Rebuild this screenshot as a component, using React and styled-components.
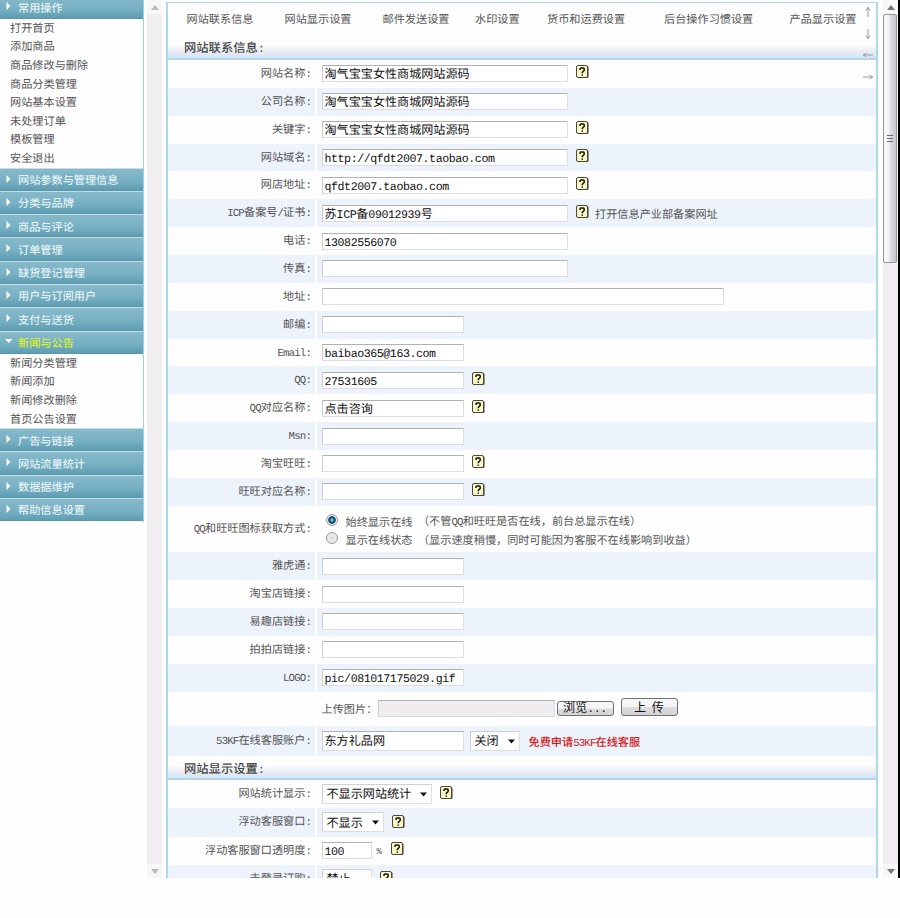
import React from "react";
import styled, { createGlobalStyle } from "styled-components";

const Global = createGlobalStyle`
  * { box-sizing: border-box; }
  body { margin: 0; background: #fefefe; text-rendering: geometricPrecision; }
`;

const CJK = `"Noto Sans CJK SC", sans-serif`;
const MONO = `"Liberation Mono", "Noto Sans CJK SC", monospace`;

const Frame = styled.div`
  display: flex;
  width: 900px;
  height: 878px;
  overflow: hidden;
  background: #fefefe;
  font-family: ${CJK};
  font-size: 11.17px;
  line-height: 16px;
  color: #555;
  white-space: nowrap;
`;

const Latin = styled.span`
  font-family: ${MONO};
  font-size: 0.96em;
  letter-spacing: ${(p) => (p.$wide ? "-0.037em" : "-0.078em")};
`;

/* Half-width characters are set in a narrow monospace beside the full-width ones. */
function Mixed({ text, wide }) {
  return text.split(/([\x21-\x7e]+)/).map((part, i) =>
    i % 2 ? <Latin key={i} $wide={wide}>{part}</Latin> : part
  );
}

/* ---------- sidebar ---------- */

const Sidebar = styled.aside`
  width: 144px;
  height: 522px;
  flex: none;
  border-right: 1px solid #9fd0ea;
  overflow: hidden;
`;

const MenuList = styled.div`
  margin-top: -4.5px;
`;

const MenuHead = styled.div`
  display: flex;
  align-items: center;
  width: 144px;
  height: 23.27px;
  padding: 1.5px 0 0 5px;
  color: ${(p) => (p.$open ? "#e4fa0a" : "#f4fbfd")};
  border-top: 1px solid #c3dfe7;
  border-bottom: 1px solid #5b96ab;
  background: linear-gradient(#87bacb, #75afc2 60%, #5f9db2);
`;

const Caret = styled.svg`
  width: 9px;
  height: 8px;
  margin: -3px 4px 0 0;
  fill: #fff;
  flex: none;
`;

const MenuItem = styled.div`
  height: 18.62px;
  padding-left: 10px;
  line-height: 18px;
`;

function Menu({ title, items = [], open }) {
  return (
    <>
      <MenuHead $open={open}>
        <Caret viewBox="0 0 9 8">
          {open ? <path d="M0 2h7.500L3.750 6z" /> : <path d="M1.500 0v8l4-4z" />}
        </Caret>
        {title}
      </MenuHead>
      {items.map((t) => <MenuItem key={t}>{t}</MenuItem>)}
    </>
  );
}

/* ---------- scroll bars ---------- */

const Track = styled.div`
  display: flex;
  flex-direction: column;
  justify-content: space-between;
  width: 15px;
  height: 878px;
  margin-left: ${(p) => p.$left}px;
  flex: none;
  background: #f0eef1;
`;

const TrackEnd = styled.div`
  display: flex;
  align-items: center;
  justify-content: center;
  height: 14px;
  background: #f8f7f8;
`;

const Thumb = styled.div`
  display: flex;
  flex-direction: column;
  align-items: center;
  justify-content: center;
  gap: 2px;
  width: 14px;
  height: 249px;
  margin-bottom: auto;
  border: 1px solid #969699;
  border-radius: 2px;
  background: linear-gradient(90deg, #f7f7f8 0 35%, #dcdcdf 55%, #c6c6ca);
`;

const Grip = styled.i`
  width: 6px;
  height: 1px;
  margin-right: 1px;
  background: #66666b;
`;

const EdgeBar = styled.div`
  width: 2px;
  margin-left: auto;
  background: #000;
`;

function Scroll({ left, color, thumb }) {
  return (
    <Track $left={left}>
      <TrackEnd><svg width="8" height="5" fill={color}><path d="M0 5h8L4 0z" /></svg></TrackEnd>
      {thumb && <Thumb><Grip /><Grip /><Grip /></Thumb>}
      <TrackEnd><svg width="8" height="5" fill={color}><path d="M0 0h8L4 5z" /></svg></TrackEnd>
    </Track>
  );
}

/* ---------- settings panel ---------- */

const Panel = styled.main`
  position: relative;
  width: 712px;
  height: 880px;
  margin: 2px 0 0 4px;
  flex: none;
  border: solid #aed6ed;
  border-width: 1px 2px 0 2px;
  overflow: hidden;
`;

const Nav = styled.nav`
  display: grid;
  grid-template-columns: 98px 98px 92.500px 72px 117px 125.500px auto;
  height: 32px;
  padding-left: 18.5px;
  line-height: 32px;
`;

const Section = styled.h2`
  height: ${(p) => p.$h}px;
  margin: 0;
  padding-left: 16px;
  font-size: 12.3px;
  font-weight: 500;
  line-height: 24px;
  color: #484848;
  border-bottom: 2px solid #b5d4ee;
  background: linear-gradient(#fefefe 42%, #e9ebf2 72%, #d3e6f7);
`;

const Row = styled.div`
  display: grid;
  grid-template-columns: 147px 559px;
  column-gap: 1.500px;
  height: ${(p) => p.$h || 27.87}px;
  > * { background: ${(p) => (p.$blue ? "#edf3fb" : "#fefefe")}; }
`;

const Label = styled.div`
  display: flex;
  align-items: center;
  justify-content: flex-end;
  padding: 0 4px 0 0;
`;

const Value = styled.div`
  display: flex;
  align-items: center;
  padding-left: 5px;
`;

const Input = styled.div`
  width: ${(p) => p.$w}px;
  height: ${(p) => p.$h || 17}px;
  padding: 0 0 0 2px;
  line-height: ${(p) => (p.$h || 17) - 2}px;
  font-size: 12.1px;
  color: #111;
  background: ${(p) => (p.$off ? "#efedf0" : "#fff")};
  border: 1px solid #dddde2;
  border-top-color: #b0b0b5;
  border-left-color: #cdcdd2;
`;

const Select = styled(Input)`
  display: flex;
  align-items: center;
  justify-content: space-between;
  padding: 1px 4px 0;
  border-top-color: #d0d0d5;
`;

const HelpIcon = styled.svg`
  width: 13px;
  height: 14px;
  flex: none;
  margin: ${(p) => p.$drop || -3}px 0 0 ${(p) => p.$gap || 8.500}px;
`;

function Help({ gap, drop }) {
  return (
    <HelpIcon $gap={gap} $drop={drop} viewBox="0 0 13 14">
      <rect x="1" y="1" width="11.500" height="12" rx="1.500" fill="#333" />
      <rect x=".5" y=".5" width="11" height="12" rx="1.500" fill="#fbf9c4" stroke="#4a4a3c" />
      <path d="M4 5V4q0-1 1-1h2.200q1 0 1 1v1q0 .7-.7 1.200T6.300 7.500v.8M6.300 9.400v1.400" fill="none" stroke="#111" strokeWidth="1.500" />
    </HelpIcon>
  );
}

const Note = styled.span`
  margin: 2px 0 0 6px;
`;

const RedLink = styled.span`
  margin: 5px 0 0 9px;
  color: #d21820;
  font-weight: 500;
`;

const Choices = styled.div`
  display: flex;
  flex-direction: column;
`;

const Choice = styled.div`
  display: flex;
  align-items: center;
  height: 18.500px;
  padding-top: 4px;
`;

const Radio = styled.i`
  width: 12px;
  height: 12px;
  margin: -4px 8px 0 4px;
  border: 1px solid #999;
  border-radius: 50%;
  background: ${(p) => p.$on
    ? "radial-gradient(circle, #67c3e8 0 10%, #174c72 35%, #174c72 48%, #eee 60%)"
    : "radial-gradient(circle, #ddd, #f7f7f7)"};
`;

const Aside = styled.span`
  margin-left: 5.5px;
`;

const UploadText = styled.span`
  width: 56px;
  margin-top: 1px;
`;

const Button = styled.button`
  width: 57px;
  height: ${(p) => p.$h}px;
  margin: ${(p) => p.$m};
  padding: 0;
  font: 12.1px/13px ${CJK};
  color: #111;
  border: 1px solid #717175;
  border-radius: 3px;
  background: linear-gradient(#f6f6f6 0 48%, #dedee0 52%, #d2d2d4);
`;

const ButtonText = styled.span`
  display: block;
  margin-top: -2px;
  word-spacing: 3px;
`;

const Percent = styled.span`
  margin: 3px 0 0 5px;
  font: 9px ${MONO};
`;

const Gap = styled.span`
  width: 6px;
`;

const Arrows = styled.div`
  position: absolute;
  top: 3px;
  right: 2px;
  display: flex;
  flex-direction: column;
  gap: 9.500px;
`;

const Arrow = styled.svg`
  width: 12px;
  height: 12px;
  fill: none;
  stroke: #999;
  transform: rotate(${(p) => p.$turn}deg);
`;

const Down = () => <svg width="7" height="5"><path d="M0 .5h7L3.500 4.500z" fill="#111" /></svg>;

const WIDE = 246;
const NARROW = 142;
const CONTACT = [
  ["网站名称:", "淘气宝宝女性商城网站源码", WIDE, true],
  ["公司名称:", "淘气宝宝女性商城网站源码", WIDE],
  ["关键字:", "淘气宝宝女性商城网站源码", WIDE, true],
  ["网站域名:", "http://qfdt2007.taobao.com", WIDE, true],
  ["网店地址:", "qfdt2007.taobao.com", WIDE, true],
  ["ICP备案号/证书:", "苏ICP备09012939号", WIDE, true, "打开信息产业部备案网址"],
  ["电话:", "13082556070", WIDE],
  ["传真:", "", WIDE],
  ["地址:", "", 402],
  ["邮编:", "", NARROW],
  ["Email:", "baibao365@163.com", NARROW],
  ["QQ:", "27531605", NARROW, true],
  ["QQ对应名称:", "点击咨询", NARROW, true],
  ["Msn:", "", NARROW],
  ["淘宝旺旺:", "", NARROW, true],
  ["旺旺对应名称:", "", NARROW, true],
];
const SHOPS = [
  ["雅虎通:", "", NARROW],
  ["淘宝店链接:", "", NARROW],
  ["易趣店链接:", "", NARROW],
  ["拍拍店链接:", "", NARROW],
  ["LOGO:", "pic/081017175029.gif", NARROW],
];

function Field({ label, h, blue, children }) {
  return (
    <Row $h={h} $blue={blue}>
      <Label><span><Mixed text={label} /></span></Label>
      <Value>{children}</Value>
    </Row>
  );
}

const textField = ([label, value, w, help, note], blue) => (
  <Field key={label} label={label} blue={blue}>
    <Input $w={w}><Mixed wide text={value} /></Input>
    {help && <Help />}
    {note && <Note>{note}</Note>}
  </Field>
);

export default function App() {
  return (
    <>
      <Global />
      <Frame>
        <Sidebar>
          <MenuList>
            <Menu title="常用操作" items={["打开首页", "添加商品", "商品修改与删除", "商品分类管理", "网站基本设置", "未处理订单", "模板管理", "安全退出"]} />
            {["网站参数与管理信息", "分类与品牌", "商品与评论", "订单管理", "缺货登记管理", "用户与订阅用户", "支付与送货"].map((t) => <Menu key={t} title={t} />)}
            <Menu open title="新闻与公告" items={["新闻分类管理", "新闻添加", "新闻修改删除", "首页公告设置"]} />
            {["广告与链接", "网站流量统计", "数据据维护", "帮助信息设置"].map((t) => <Menu key={t} title={t} />)}
          </MenuList>
        </Sidebar>
        <Scroll left={3} color="#b9b9bc" />
        <Panel>
          <Nav>
            {["网站联系信息", "网站显示设置", "邮件发送设置", "水印设置", "货币和运费设置", "后台操作习惯设置", "产品显示设置"].map((t) => <span key={t}>{t}</span>)}
          </Nav>
          <Section $h={25}><Mixed text="网站联系信息:" /></Section>
          {CONTACT.map((f, i) => textField(f, i % 2 === 1))}
          <Field label="QQ和旺旺图标获取方式:" h={46.6}>
            <Choices>
              <Choice><Radio $on />始终显示在线<Aside><Mixed text="（不管QQ和旺旺是否在线，前台总显示在线）" /></Aside></Choice>
              <Choice><Radio />显示在线状态<Aside>（显示速度稍慢，同时可能因为客服不在线影响到收益）</Aside></Choice>
            </Choices>
          </Field>
          {SHOPS.map((f, i) => textField(f, i % 2 === 0))}
          <Field label="" h={34}>
            <UploadText>上传图片：</UploadText>
            <Input $w={177} $off />
            <Button $h={15} $m="0 0 0 2px"><ButtonText>浏览<Mixed wide text="..." /></ButtonText></Button>
            <Button $h={18} $m="-3px 0 0 7px"><ButtonText>上 传</ButtonText></Button>
          </Field>
          <Field label="53KF在线客服账户:" h={30} blue>
            <Input $w={142} $h={20}>东方礼品网</Input>
            <Gap />
            <Select $w={50} $h={20}>关闭<Down /></Select>
            <RedLink><Mixed text="免费申请53KF在线客服" /></RedLink>
          </Field>
          <Section $h={24}><Mixed text="网站显示设置:" /></Section>
          <Field label="网站统计显示:" h={28.5}>
            <Select $w={110} $h={20}>不显示网站统计<Down /></Select><Help drop={-1} />
          </Field>
          <Field label="浮动客服窗口:" h={28.5} blue>
            <Select $w={62} $h={20}>不显示<Down /></Select><Help gap={8} drop={-1} />
          </Field>
          <Field label="浮动客服窗口透明度:" h={28}>
            <Input $w={50}><Mixed wide text="100" /></Input><Percent>%</Percent><Help gap={9.5} />
          </Field>
          <Field label="未登录订购:" h={28.5} blue>
            <Select $w={50} $h={20}>禁止</Select><Help gap={8} drop={-1} />
          </Field>
          <Arrows>
            {[0, 180, 270, 90].map((turn) => (
              <Arrow key={turn} $turn={turn} viewBox="0 0 12 12"><path d="M6 11V1M4 4.500L6 1.500L8 4.500" /></Arrow>
            ))}
          </Arrows>
        </Panel>
        <Scroll left={5} color="#77777b" thumb />
        <EdgeBar />
      </Frame>
    </>
  );
}
